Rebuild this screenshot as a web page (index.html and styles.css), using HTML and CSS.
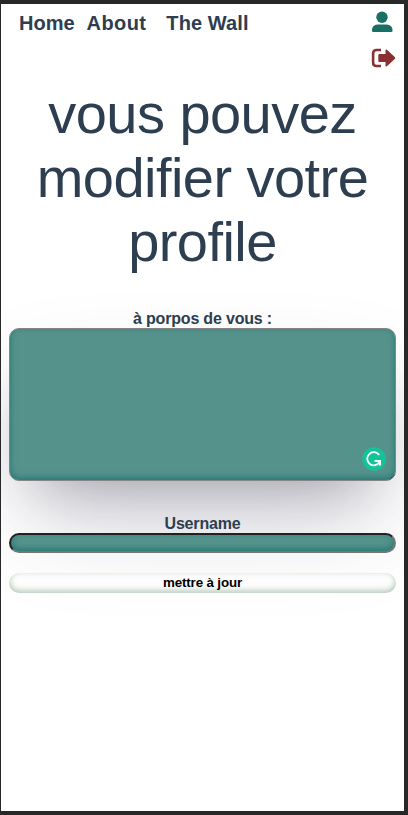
FILE: index.html
```html
<!DOCTYPE html>
<html lang="fr">
<head>
<meta charset="utf-8">
<title>Profile</title>
<link rel="stylesheet" href="styles.css">
</head>
<body>
<div class="page">
  <nav class="nav">
    <div class="links"><a class="home">Home</a><a class="about">About</a><a class="wall">The Wall</a></div>
    <div class="actions">
      <svg class="user" viewBox="0 0 20 20"><circle cx="10" cy="5.300" r="5.700"/><path d="M5.500 12.500H14.500Q20.500 13 20.500 18V18.700Q20.500 20 19.200 20H1.300Q0 20 0 18.700V18Q0 13 5.500 12.500Z"/></svg>
      <svg class="logout" viewBox="0 0 24 20"><path class="door" d="M9.500 2H5Q1.600 2 1.600 5.500V14.500Q1.600 18 5 18H9.500"/><path d="M6.800 7.200Q6.800 6 8 6H14V2.400Q14 .8 15.400 1.700L23.500 9.200Q24 10 23.500 10.800L15.400 18.300Q14 19.200 14 17.600V14H8Q6.800 14 6.800 12.800Z"/></svg>
    </div>
  </nav>
  <h1>vous pouvez modifier votre profile</h1>
  <form class="form">
    <label for="bio">à porpos de vous :</label>
    <div class="bio-wrap">
      <textarea id="bio" class="bio"></textarea>
      <svg class="badge" viewBox="0 0 24 24"><circle cx="12" cy="12" r="11.800"/><path d="M17.200 7.900A6.600 6.600 0 1 0 17.600 15M12.500 13.800H18V18.500"/><path class="tip" d="M14 13.200H18.800V18Z"/></svg>
      <svg class="grip" viewBox="0 0 6 6"><path d="M1 5.500L5.500 1"/></svg>
    </div>
    <label for="username">Username</label>
    <input id="username" class="username" type="text">
    <button type="button" class="submit">mettre à jour</button>
  </form>
</div>
</body>
</html>
```
FILE: styles.css
```css
* { box-sizing: border-box; }
body {
  margin: 0;
  height: 815px;
  padding: 4px 4px 4px 1px;
  background: #282828;
  font-family: "Liberation Sans", Arial, sans-serif;
  color: #2c3e50;
}
.page {
  height: 807px;
  padding: 0 8px;
  background: #fff;
  overflow: hidden;
}
.nav {
  display: flex;
  justify-content: space-between;
  height: 78px;
  padding: 7px 0 0 10px;
}
.links { display: flex; font-size: 20px; font-weight: bold; line-height: 24px; }
.home { margin-right: 12px; }
.about { margin-right: 20px; letter-spacing: .4px; }
.wall { letter-spacing: .1px; }
.actions { display: flex; flex-direction: column; width: 25px; }
.user { width: 20px; height: 20px; margin: 1px 0 0 .5px; overflow: visible; fill: #196f63; }
.logout { width: 25px; height: 20px; margin-top: 16px; fill: #8b3032; }
.door { fill: none; stroke: #8b3032; stroke-width: 2.600; }
h1 {
  margin: 0 0 36px;
  font-size: 56px;
  font-weight: normal;
  line-height: 64px;
  letter-spacing: -.55px;
  text-align: center;
}
.form { display: flex; flex-direction: column; }
label {
  height: 18px;
  font-size: 16px;
  line-height: 17px;
  letter-spacing: -.18px;
  font-weight: bold;
  text-align: center;
  position: relative;
  z-index: 1;
}
.bio-wrap { position: relative; height: 153px; margin-bottom: 34px; }
.bio, .username {
  display: block;
  width: 100%;
  margin: 0;
  background: #56928c;
  outline: none;
}
.bio {
  height: 153px;
  resize: none;
  border: 1px solid #858585;
  border-radius: 10px;
  box-shadow: rgba(50, 50, 93, .25) 0 50px 100px -20px, rgba(0, 0, 0, .3) 0 30px 60px -30px, rgba(10, 110, 100, .7) 0 -2px 6px 0 inset;
}
.badge { position: absolute; right: 10px; top: 119px; width: 24px; height: 24px; fill: #15c39a; }
.badge path { fill: none; stroke: #fff; stroke-width: 1.8; }
.badge .tip { fill: #fff; stroke: none; }
.grip { position: absolute; right: 1px; bottom: 1px; width: 6px; height: 6px; fill: none; stroke: #222; stroke-dasharray: 1.5 1; }
.username {
  position: relative;
  height: 20px;
  border: 2px inset #767676;
  border-radius: 10px;
  box-shadow: rgba(10, 110, 100, .7) 0 -2px 6px 0 inset;
}
.submit {
  position: relative;
  height: 20px;
  margin-top: 20px;
  padding: 0 0 2px;
  border: 0;
  border-radius: 10px;
  background: #fdfdfd;
  box-shadow: rgba(30, 90, 40, .35) 0 -2px 6px 0 inset;
  font: bold 13.333px "Liberation Sans", Arial, sans-serif;
  letter-spacing: -.13px;
  color: #000;
}
```
